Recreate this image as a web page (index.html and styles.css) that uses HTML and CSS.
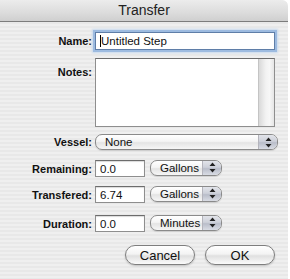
FILE: index.html
```html
<!DOCTYPE html>
<html lang="en">
<head>
    <meta charset="UTF-8">
    <title>Transfer</title>
    <link rel="stylesheet" href="styles.css">
</head>
<body>
    <div class="window">
        <div class="titlebar">Transfer</div>
        <div class="sheet">
            <div class="row row-name">
                <span class="label">Name:</span>
                <div class="field field-name focused"><span class="caret"></span>Untitled Step</div>
            </div>
            <div class="row row-notes">
                <span class="label">Notes:</span>
                <div class="notes">
                    <div class="notes-text"></div>
                    <div class="scrollbar"></div>
                </div>
            </div>
            <div class="row row-vessel">
                <span class="label">Vessel:</span>
                <div class="popup popup-wide">
                    <span class="popup-text">None</span>
                    <span class="arrows">
                        <svg width="7" height="11" viewBox="0 0 7 11"><path d="M3.5 0.5 L6.5 4 L0.5 4 Z M0.5 7 L6.5 7 L3.5 10.5 Z" fill="#222"/></svg>
                    </span>
                </div>
            </div>
            <div class="row row-amount">
                <span class="label">Remaining:</span>
                <div class="field field-small">0.0</div>
                <div class="popup popup-unit">
                    <span class="popup-text">Gallons</span>
                    <span class="arrows">
                        <svg width="7" height="11" viewBox="0 0 7 11"><path d="M3.5 0.5 L6.5 4 L0.5 4 Z M0.5 7 L6.5 7 L3.5 10.5 Z" fill="#222"/></svg>
                    </span>
                </div>
            </div>
            <div class="row row-amount row-transfered">
                <span class="label">Transfered:</span>
                <div class="field field-small">6.74</div>
                <div class="popup popup-unit">
                    <span class="popup-text">Gallons</span>
                    <span class="arrows">
                        <svg width="7" height="11" viewBox="0 0 7 11"><path d="M3.5 0.5 L6.5 4 L0.5 4 Z M0.5 7 L6.5 7 L3.5 10.5 Z" fill="#222"/></svg>
                    </span>
                </div>
            </div>
            <div class="row row-amount row-duration">
                <span class="label">Duration:</span>
                <div class="field field-small">0.0</div>
                <div class="popup popup-unit">
                    <span class="popup-text">Minutes</span>
                    <span class="arrows">
                        <svg width="7" height="11" viewBox="0 0 7 11"><path d="M3.5 0.5 L6.5 4 L0.5 4 Z M0.5 7 L6.5 7 L3.5 10.5 Z" fill="#222"/></svg>
                    </span>
                </div>
            </div>
            <div class="buttons">
                <button type="button" class="btn">Cancel</button>
                <button type="button" class="btn">OK</button>
            </div>
        </div>
    </div>
</body>
</html>
```

FILE: styles.css
```css
body {
    margin: 0;
    background: #ffffff;
    font-family: "Liberation Sans", Arial, sans-serif;
    color: #111;
}

.window {
    width: 288px;
    height: 279px;
    border-top-right-radius: 6px;
    overflow: hidden;
    background: repeating-linear-gradient(#efefef 0 2px, #e8e8e8 2px 4px);
}

.titlebar {
    height: 21px;
    line-height: 21px;
    text-align: center;
    font-size: 14px;
    color: #222;
    background: linear-gradient(#ececec, #dcdcdc 60%, #cfcfcf);
    border-bottom: 1px solid #7c7c7c;
    border-top-right-radius: 6px;
}

.sheet {
    display: flex;
    flex-direction: column;
}

.row {
    display: flex;
    align-items: center;
}

.label {
    width: 92px;
    text-align: right;
    font-size: 11px;
    font-weight: bold;
    margin-right: 3px;
    color: #111;
}

.field {
    box-sizing: border-box;
    height: 18px;
    background: #fff;
    border: 1px solid #8e8e8e;
    border-top-color: #6c6c6c;
    box-shadow: inset 0 1px 1px rgba(0, 0, 0, 0.15);
    font-size: 11.5px;
    line-height: 16px;
    padding-left: 4px;
}

.row-name {
    margin-top: 10px;
}

.field-name {
    width: 180px;
}

.focused {
    box-shadow: 0 0 0 2px #9dbbe0, 0 0 2px 3px #c8d9ee;
    border-color: #5f7ea8;
}

.caret {
    display: inline-block;
    width: 1px;
    height: 12px;
    background: #000;
    vertical-align: -2px;
}

.row-notes {
    margin-top: 8px;
    align-items: flex-start;
}

.row-notes .label {
    margin-top: 8px;
}

.notes {
    box-sizing: border-box;
    width: 180px;
    height: 69px;
    display: flex;
    background: #fff;
    border: 1px solid #8e8e8e;
    border-top-color: #6c6c6c;
}

.notes-text {
    flex: 1;
}

.scrollbar {
    width: 15px;
    border-left: 1px solid #c4c4c4;
    background: linear-gradient(90deg, #d9d9d9, #f2f2f2 45%, #f7f7f7 70%, #e6e6e6);
}

.row-vessel {
    margin-top: 7px;
}

.popup {
    box-sizing: border-box;
    height: 16px;
    display: flex;
    align-items: center;
    border: 1px solid #8a8a8a;
    border-radius: 7px;
    overflow: hidden;
    background: linear-gradient(#ffffff, #f4f4f4 45%, #e4e4e4 55%, #f6f6f6);
    box-shadow: 0 1px 1px rgba(0, 0, 0, 0.12);
    font-size: 11.5px;
}

.popup-text {
    padding-left: 9px;
}

.popup-wide {
    width: 183px;
}

.arrows {
    margin-left: auto;
    width: 18px;
    height: 100%;
    display: flex;
    align-items: center;
    justify-content: center;
    border-left: 1px solid #b4b4bc;
    background: linear-gradient(#e2e4ea, #cdd0d9 45%, #b9bdc9 55%, #d9dce4);
}

.row-amount {
    margin-top: 10px;
}

.row-transfered {
    margin-top: 9px;
}

.row-duration {
    margin-top: 12px;
}

.field-small {
    width: 50px;
    height: 17px;
}

.popup-unit {
    width: 72px;
    margin-left: 5px;
    margin-top: -2px;
}

.buttons {
    display: flex;
    justify-content: flex-end;
    gap: 10px;
    margin-top: 13px;
    padding-right: 13px;
}

.btn {
    width: 70px;
    height: 20px;
    padding: 0;
    border: 1px solid #7e7e7e;
    border-radius: 10px;
    background: linear-gradient(#ffffff, #f3f3f3 45%, #e0e0e0 55%, #fafafa);
    box-shadow: 0 1px 2px rgba(0, 0, 0, 0.2);
    font-family: "Liberation Sans", Arial, sans-serif;
    font-size: 13px;
    color: #111;
}
```
